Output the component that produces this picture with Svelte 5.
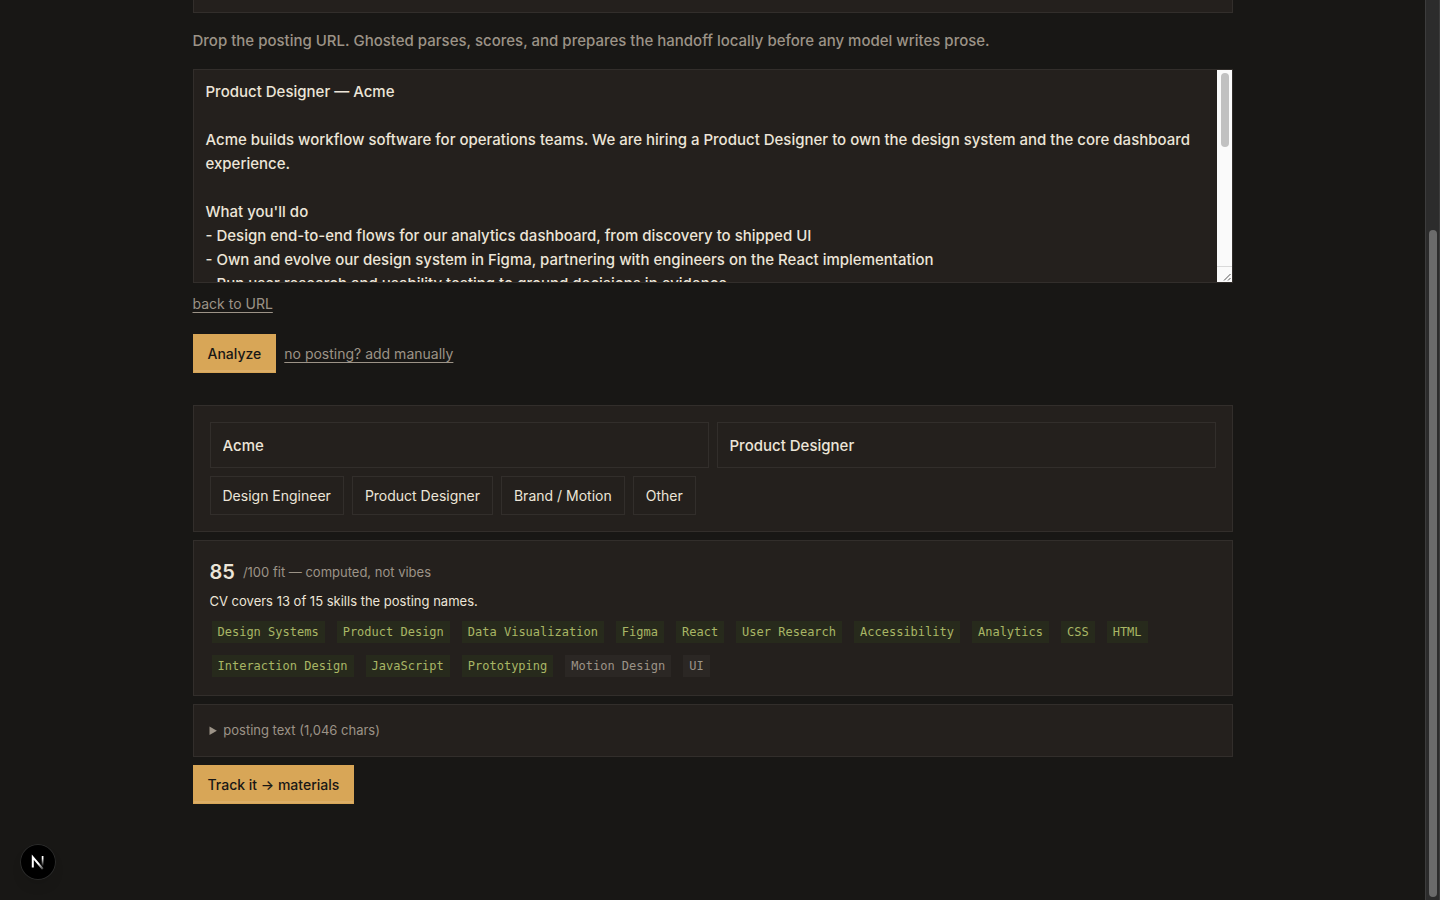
<script>
  const posting = `Product Designer — Acme

Acme builds workflow software for operations teams. We are hiring a Product Designer to own the design system and the core dashboard experience.

What you'll do
- Design end-to-end flows for our analytics dashboard, from discovery to shipped UI
- Own and evolve our design system in Figma, partnering with engineers on the React implementation
- Run user research and usability testing to ground decisions in evidence
- Prototype interaction details in HTML, CSS and JavaScript
- Define data visualization patterns for dense operational data
- Raise the bar for accessibility across the product

What we look for
- A portfolio of shipped product design work
- Strong interaction design and prototyping skills
- Experience maintaining design systems
- Comfort with motion design
- Clear writing and calm collaboration

Details
- Remote friendly
- Full time
- Reports to the Head of Design`;

  const roles = ['Design Engineer', 'Product Designer', 'Brand / Motion', 'Other'];
  const matched = [
    'Design Systems', 'Product Design', 'Data Visualization', 'Figma', 'React',
    'User Research', 'Accessibility', 'Analytics', 'CSS', 'HTML',
    'Interaction Design', 'JavaScript', 'Prototyping'
  ];
  const missing = ['Motion Design', 'UI'];

  let text = $state(posting);
  let company = $state('Acme');
  let title = $state('Product Designer');
  let open = $state(false);
</script>

<div class="page">
  <main>
    <div class="previous"></div>
    <p class="intro">Drop the posting URL. Ghosted parses, scores, and prepares the handoff locally before any model writes prose.</p>
    <div class="editor">
      <textarea rows="8" aria-label="Posting text" bind:value={text}></textarea>
      <div class="scroll" aria-hidden="true">
        <div class="rail"><div class="grip"></div></div>
        <svg class="corner" width="15" height="15" viewBox="0 0 15 15" fill="none" stroke="#555">
          <path d="M7 13.5 13.5 7M11 13.5l2.5-2.5" />
        </svg>
      </div>
    </div>
    <div class="back"><a href="#url">back to URL</a></div>
    <div class="actions">
      <button class="primary">Analyze</button>
      <a href="#manual">no posting? add manually</a>
    </div>

    <div class="cards">
      <section class="card details">
        <div class="fields">
          <input aria-label="Company" bind:value={company} />
          <input aria-label="Role title" bind:value={title} />
        </div>
        <div class="roles">
          {#each roles as role}
            <button>{role}</button>
          {/each}
        </div>
      </section>

      <section class="card">
        <div class="score"><strong>85</strong><span>/100 fit — computed, not vibes</span></div>
        <p class="summary">CV covers 13 of 15 skills the posting names.</p>
        <ul class="skills">
          {#each matched as skill}
            <li class="hit">{skill}</li>
          {/each}
          {#each missing as skill}
            <li>{skill}</li>
          {/each}
        </ul>
      </section>

      <details class="card" bind:open>
        <summary>posting text (1,046 chars)</summary>
        {#if open}
          <p>{text}</p>
        {/if}
      </details>
      <button class="primary">Track it → materials</button>
    </div>
  </main>
  <div class="track" aria-hidden="true"><div class="thumb"></div></div>
</div>

<button class="dev" aria-label="Open developer tools">
  <svg width="36" height="36" viewBox="0 0 36 36" fill="none">
    <defs>
      <linearGradient id="leg" x1="0" y1="12" x2="0" y2="24" gradientUnits="userSpaceOnUse">
        <stop offset="0.2" stop-color="#fff" />
        <stop offset="0.85" stop-color="#fff" stop-opacity="0" />
      </linearGradient>
      <linearGradient id="slash" x1="19" y1="19" x2="24" y2="25" gradientUnits="userSpaceOnUse">
        <stop stop-color="#fff" />
        <stop offset="1" stop-color="#fff" stop-opacity="0.2" />
      </linearGradient>
    </defs>
    <path d="M12.8 23.5V13.2L22.8 25" stroke="url(#slash)" stroke-width="2" />
    <path d="M22.6 12v11" stroke="url(#leg)" stroke-width="1.7" />
  </svg>
</button>

<style>
  :global(body) {
    background: #181715;
    overflow: hidden;
  }
  .page {
    display: flex;
    min-height: 100vh;
    color: #ece5d8;
    font: 15px/24px Inter, sans-serif;
  }
  .page * {
    box-sizing: border-box;
  }
  main {
    flex: 1;
    min-width: 0;
    max-width: 1040px;
    margin: 0 auto;
    padding-bottom: 96px;
  }
  .previous {
    height: 13px;
    background: #24201d;
    border: 1px solid #322e2b;
    border-top: 0;
  }
  p {
    margin: 0;
  }
  .intro {
    margin: 16px 0;
    color: #9c9387;
    font-weight: 500;
  }
  textarea,
  input,
  button {
    margin: 0;
    color: inherit;
    font: inherit;
    border: 1px solid #322e2b;
    border-radius: 0;
    background: #24201d;
    outline: 0;
  }
  .editor {
    position: relative;
  }
  textarea {
    display: block;
    width: 100%;
    padding: 10px 27px 10px 12px;
    font-weight: 500;
    resize: none;
  }
  .scroll {
    position: absolute;
    top: 1px;
    right: 1px;
    bottom: 1px;
    width: 15px;
    display: flex;
    flex-direction: column;
    background: #fafafa;
    pointer-events: none;
  }
  .rail {
    flex: 1;
    padding: 3px 3px 3px 4px;
    border-bottom: 1px solid #d9d9d9;
  }
  .grip {
    height: 74px;
    border-radius: 4px;
    background: #c1c1c1;
  }
  .corner {
    flex: none;
  }
  a {
    color: #9c9387;
    font-size: 14px;
    line-height: 21px;
    text-decoration: underline;
    text-decoration-thickness: 1px;
    text-underline-offset: 3px;
  }
  .back {
    display: flex;
    padding: 10px 0 20px;
  }
  .actions {
    display: flex;
    align-items: center;
    gap: 8px;
    margin-bottom: 32px;
  }
  input {
    min-width: 0;
    height: 46px;
    padding: 10px 12px;
    font-weight: 500;
  }
  button {
    padding: 8px 12px;
    font-size: 14px;
    line-height: 21px;
    cursor: pointer;
  }
  .primary {
    padding: 8px 14px;
    color: #181715;
    font-weight: 500;
    background: #d8a657;
    border-color: #d8a657;
    box-shadow: inset 0 -2px 0 #dcae67;
  }
  .cards {
    display: flex;
    flex-direction: column;
    align-items: flex-start;
    gap: 8px;
  }
  .card {
    width: 100%;
    padding: 16px;
    background: #24201d;
    border: 1px solid #322e2b;
  }
  .details {
    display: grid;
    gap: 8px;
  }
  .fields {
    display: grid;
    grid-template-columns: 1fr 1fr;
    gap: 8px;
  }
  .roles {
    display: flex;
    flex-wrap: wrap;
    gap: 8px;
  }
  .score {
    display: flex;
    align-items: center;
    gap: 8px;
    line-height: 30px;
  }
  .score strong {
    font-size: 20px;
    font-weight: 600;
  }
  .score span {
    color: #9c9387;
    font-size: 13px;
  }
  .summary {
    margin: 4px 0 8px;
    font-size: 13px;
    line-height: 20px;
  }
  .skills {
    display: flex;
    flex-wrap: wrap;
    gap: 12px;
    margin: 0;
    padding: 2px;
    list-style: none;
    font: 12px/18px "DejaVu Sans Mono", monospace;
  }
  .skills li {
    padding: 2px 6px;
    color: #9c9387;
    background: #2b2724;
  }
  .skills .hit {
    color: #a9b665;
    background: #272a1c;
  }
  details {
    color: #9c9387;
    font-size: 13px;
    line-height: 19px;
  }
  details p {
    white-space: pre-wrap;
  }
  summary {
    cursor: pointer;
  }
  .track {
    flex: none;
    width: 15px;
    height: 100vh;
    padding: 230px 2px 3px 3px;
    background: #2c2c2c;
    border: solid #3d3d3d;
    border-width: 0 1px;
  }
  .thumb {
    height: 100%;
    border-radius: 4px;
    background: #6b6b6b;
  }
  .dev {
    position: fixed;
    left: 20px;
    bottom: 20px;
    width: 36px;
    height: 36px;
    padding: 0;
    border: 0;
    border-radius: 50%;
    background: #000;
    box-shadow: inset 0 0 0 1px #2b2b2a, 0 8px 16px -8px #00000040;
  }
  .dev svg {
    display: block;
  }
</style>
